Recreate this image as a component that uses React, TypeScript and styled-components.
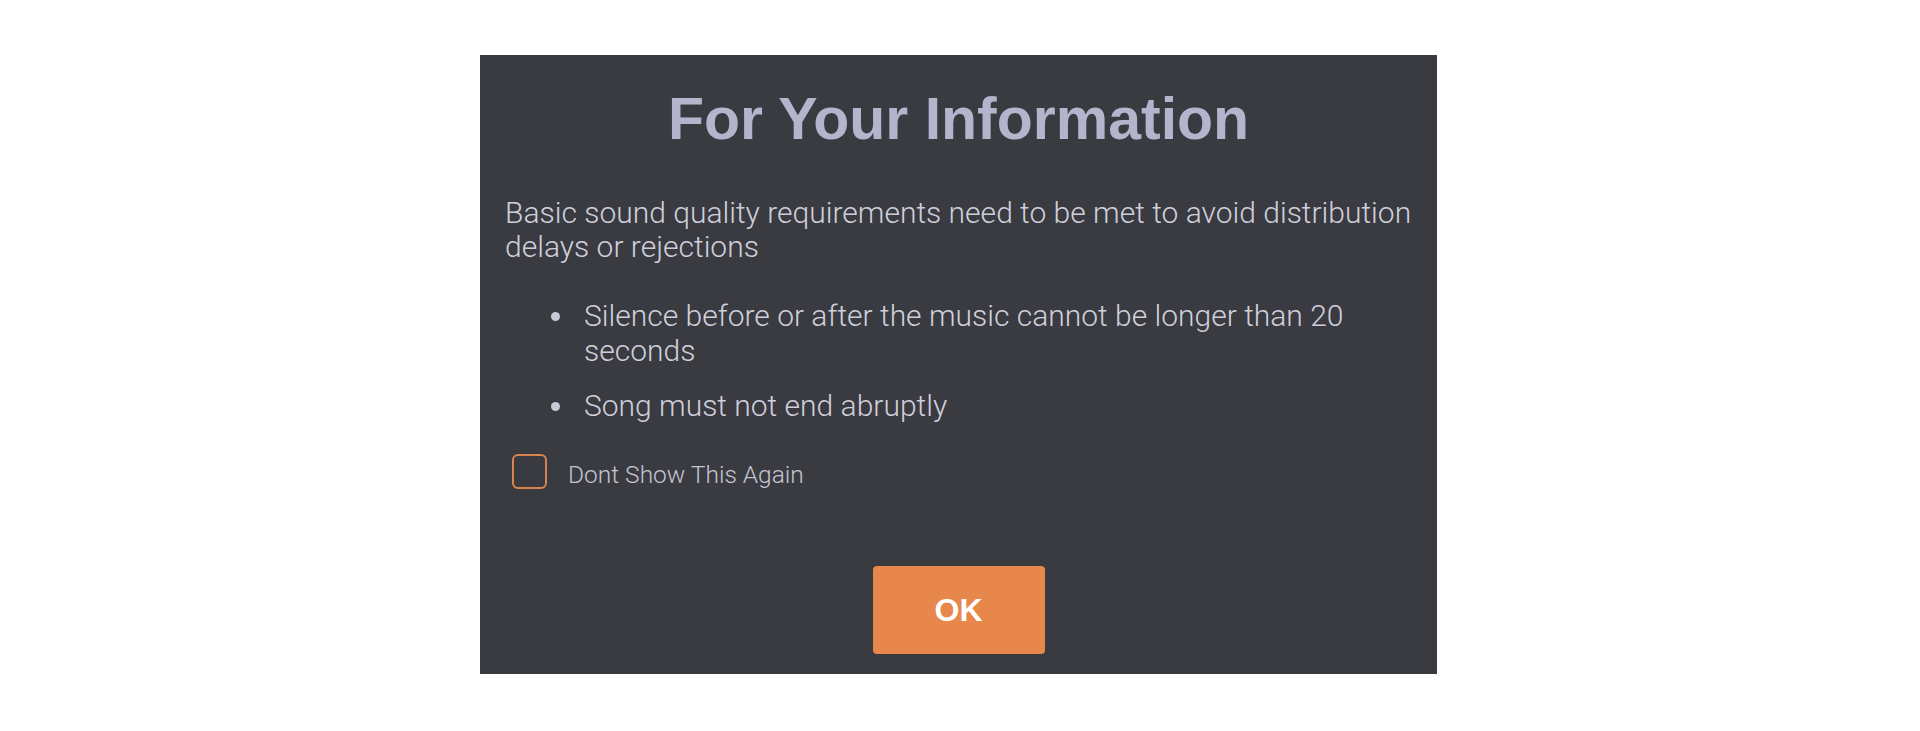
import React, { useState } from "react";
import styled, { createGlobalStyle } from "styled-components";

const GlobalStyle = createGlobalStyle`
  html, body {
    margin: 0;
    padding: 0;
    background: #ffffff;
  }
  body {
    padding-top: 55px;
    font-family: Roboto, "Liberation Sans", Arial, sans-serif;
  }
`;

const notes = [
  "Silence before or after the music cannot be longer than 20 seconds",
  "Song must not end abruptly",
];

const App = () => {
  const [hide, setHide] = useState(false);

  return (
    <>
      <GlobalStyle />
      <Dialog>
        <Title>For Your Information</Title>
        <Intro>
          Basic sound quality requirements need to be met to avoid distribution
          delays or rejections
        </Intro>
        <NoteList>
          {notes.map(note => (
            <Note key={note}>{note}</Note>
          ))}
        </NoteList>
        <CheckRow>
          <CheckBox
            type="checkbox"
            checked={hide}
            onChange={() => setHide(!hide)}
          />
          <CheckText>Dont Show This Again</CheckText>
        </CheckRow>
        <Footer>
          <OkButton>OK</OkButton>
        </Footer>
      </Dialog>
    </>
  );
};

export default App;

const Dialog = styled.div`
  width: 957px;
  margin: 0 0 0 480px;
  box-sizing: border-box;
  padding: 30px 25px 20px;
  background: #3a3b40;
  display: flex;
  flex-direction: column;
`;

const Title = styled.h1`
  margin: 0;
  font-family: "Liberation Sans", Arial, sans-serif;
  font-size: 59px;
  line-height: 69px;
  font-weight: 700;
  text-align: center;
  color: #b4b4cc;
`;

const Intro = styled.p`
  margin: 42px 0 0;
  font-size: 30px;
  line-height: 34px;
  font-weight: 300;
  color: #cfcfdc;
`;

const NoteList = styled.ul`
  margin: 34px 0 0;
  padding: 0 0 0 46px;
  list-style: none;
  display: flex;
  flex-direction: column;
  gap: 20px;
`;

const Note = styled.li`
  display: flex;
  align-items: flex-start;
  font-size: 30px;
  line-height: 35px;
  font-weight: 300;
  color: #cfcfdc;
  &::before {
    content: "";
    flex: none;
    width: 9px;
    height: 9px;
    margin: 14px 24px 0 0;
    border-radius: 50%;
    background: #c9c9d8;
  }
`;

const CheckRow = styled.label`
  margin-top: 31px;
  padding-left: 7px;
  display: flex;
  align-items: flex-end;
  gap: 21px;
  cursor: pointer;
`;

const CheckText = styled.span`
  font-size: 24.5px;
  line-height: 29px;
  font-weight: 300;
  color: #c4c4d2;
`;

const CheckBox = styled.input`
  appearance: none;
  margin: 0;
  width: 35px;
  height: 35px;
  box-sizing: border-box;
  border: 2px solid #d8844d;
  border-radius: 6px;
  background: transparent;
  cursor: pointer;
  &:checked {
    background: #d8844d;
  }
`;

const Footer = styled.div`
  margin-top: 77px;
  display: flex;
  justify-content: center;
`;

const OkButton = styled.button`
  width: 172px;
  height: 88px;
  border: none;
  border-radius: 4px;
  background: #e8874c;
  color: #ffffff;
  font-family: "Liberation Sans", Arial, sans-serif;
  font-size: 32px;
  font-weight: 700;
  cursor: pointer;
`;
